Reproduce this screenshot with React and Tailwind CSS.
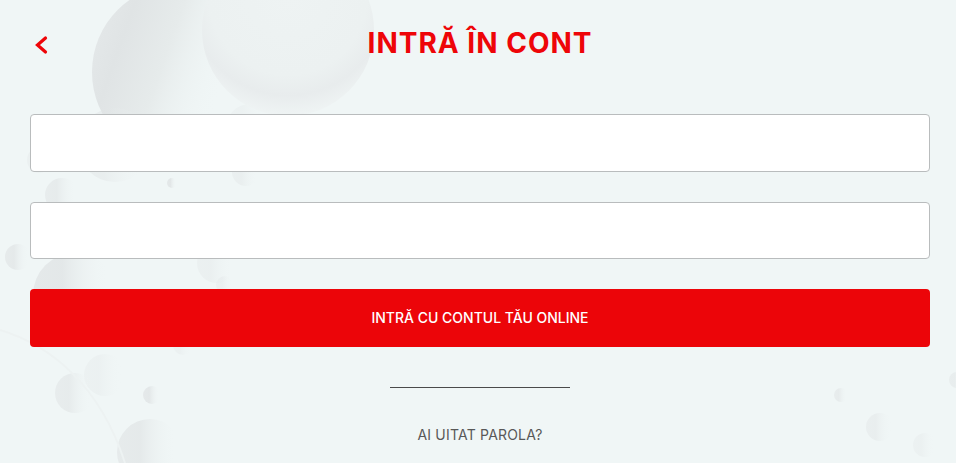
import React from "react";

// decorative bubbles in the page background: [cx, cy, r, opacity]
const bubbles = [
  [115, 145, 37, 0.45],
  [250, 128, 24, 0.25],
  [40, 160, 13, 0.35],
  [62, 195, 17, 0.6],
  [18, 257, 13, 0.7],
  [75, 295, 42, 0.8],
  [172, 183, 5, 0.85],
  [246, 172, 14, 0.4],
  [217, 263, 20, 0.35],
  [225, 285, 9, 0.35],
  [105, 375, 21, 0.3],
  [75, 393, 20, 0.6],
  [152, 395, 9, 0.8],
  [150, 452, 33, 0.7],
  [183, 345, 10, 0.3],
  [841, 395, 7, 0.6],
  [880, 427, 14, 0.45],
  [925, 445, 12, 0.3],
  [957, 380, 8, 0.5],
];

const Background = () => (
  <svg className="absolute left-0 top-0 w-[956px] h-[463px]" viewBox="0 0 956 463" aria-hidden="true">
    <defs>
      <linearGradient id="bubble" x1="0" y1="0" x2="1" y2="0">
        <stop offset="0" stopColor="#e2e6e7" />
        <stop offset="0.35" stopColor="#e0e4e5" />
        <stop offset="0.9" stopColor="#f0f6f6" stopOpacity="0" />
      </linearGradient>
      <linearGradient id="bigBubble" x1="0" y1="0" x2="1" y2="0.35">
        <stop offset="0" stopColor="#e6eaeb" />
        <stop offset="0.25" stopColor="#e0e4e5" />
        <stop offset="0.5" stopColor="#e6ebeb" />
        <stop offset="0.85" stopColor="#f0f6f6" stopOpacity="0" />
      </linearGradient>
      <radialGradient id="glass" cx="0.5" cy="0.3" r="0.7">
        <stop offset="0" stopColor="#eef3f3" />
        <stop offset="0.66" stopColor="#ecf1f1" />
        <stop offset="0.83" stopColor="#e8eced" />
        <stop offset="1" stopColor="#eff4f4" />
      </radialGradient>
    </defs>
    <circle cx="180" cy="72" r="88" fill="url(#bigBubble)" />
    {bubbles.map(([cx, cy, r, o], i) => (
      <circle key={i} cx={cx} cy={cy} r={r} fill="url(#bubble)" opacity={o} />
    ))}
    <circle cx="288" cy="30" r="86" fill="url(#glass)" />
    <path d="M0 330 C50 345 100 385 125 463" fill="none" stroke="#edf2f2" strokeWidth="2" />
  </svg>
);

const Field = ({ className }) => (
  <input
    type="text"
    className={`block w-full bg-white border border-[#b9bcbd] rounded-[4px] outline-none ${className}`}
  />
);

export default function App() {
  return (
    <div className="relative h-[463px] overflow-hidden bg-[#f0f6f6] font-['Inter',sans-serif]">
      <Background />
      <div className="relative flex flex-col w-[960px] px-[30px]">
        {/* Header */}
        <div className="flex items-center h-[114px] pb-[30px]">
          <button className="w-[24px] text-[#ee0508] mt-[6px]" aria-label="Înapoi">
            <svg width="24" height="20" viewBox="0 0 24 20" fill="none" stroke="currentColor" strokeWidth="3.2">
              <path d="M15.5 3 L7.5 10 L15.5 17" strokeLinecap="round" strokeLinejoin="miter" />
            </svg>
          </button>
          <h1 className="flex-1 text-center pr-[24px] pt-[2px] text-[28px] leading-none font-bold tracking-[1px] text-[#ee0508]">
            INTRĂ ÎN CONT
          </h1>
        </div>

        {/* Form */}
        <Field className="h-[58px]" />
        <Field className="h-[57px] mt-[30px]" />
        <button className="mt-[30px] h-[58px] w-full rounded-[4px] bg-[#ec0509] pb-[2px] text-white text-[14px] font-medium">
          INTRĂ CU CONTUL TĂU ONLINE
        </button>

        <div className="mt-[40px] mx-auto w-[180px] h-px bg-[#4a4a4a]" />

        <a className="mt-[38px] text-center text-[14px] leading-[18px] tracking-[0.2px] text-[#585858]">
          AI UITAT PAROLA?
        </a>
      </div>
    </div>
  );
}
